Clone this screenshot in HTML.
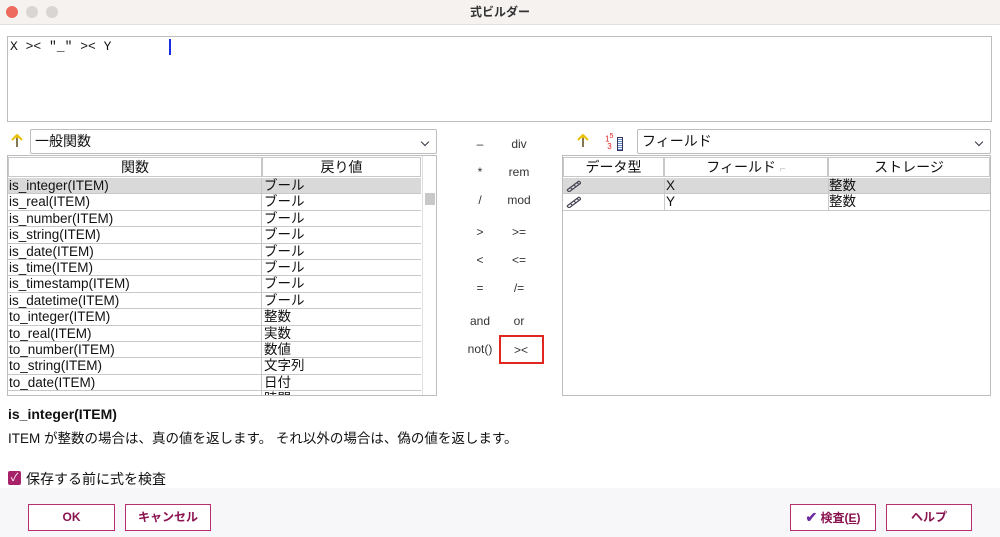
<!DOCTYPE html>
<html><head><meta charset="utf-8"><style>
*{box-sizing:border-box;margin:0;padding:0}
body{width:1000px;height:537px;background:#fff;font-family:"Liberation Sans","Noto Sans CJK JP",sans-serif;font-size:13px;color:#111;position:relative;overflow:hidden}
.a{position:absolute}
.title{left:0;top:0;width:1000px;height:25px;background:#f6f2f0;border-bottom:1px solid #e2dedb;text-align:center;line-height:24px;font-size:12px;font-weight:bold;color:#333}
.dot{width:12px;height:12px;border-radius:50%;top:6px}
.ta{left:7px;top:36px;width:985px;height:86px;border:1px solid #bdbdbd}
.combo{height:25px;border:1px solid #bdbdbd;border-radius:2px;line-height:23px;padding-left:4px;font-size:14px}
.chev{position:absolute;right:8px;top:9px;width:6px;height:6px;border-right:1.5px solid #334;border-bottom:1.5px solid #334;transform:rotate(45deg)}
.tbl{border:1px solid #bdbdbd}
.row{position:absolute;height:16.4px;border-bottom:1px solid #c8c8c8;line-height:15px;font-size:13.5px}
.hd{position:absolute;top:1px;height:20px;border:1px solid #c8c8c8;text-align:center;line-height:19px;font-size:14px}
.op{position:absolute;font-size:12px;color:#333;width:40px;text-align:center;font-family:"Liberation Sans",sans-serif}
.btn{position:absolute;top:504px;height:27px;border:1px solid #b5306e;background:#fff;color:#8a1450;font-weight:bold;font-size:12px;text-align:center;line-height:25px}
</style></head><body>
<div class="a title">式ビルダー</div>
<div class="a dot" style="left:6px;background:#ed6a5e"></div>
<div class="a dot" style="left:26px;background:#d8d5d3"></div>
<div class="a dot" style="left:46px;background:#d8d5d3"></div>
<div class="a ta"><div class="a" style="left:2px;top:2px;font-family:'Liberation Mono',monospace;font-size:13px">X &gt;&lt; "_" &gt;&lt; Y</div><div class="a" style="left:161px;top:2px;width:2px;height:16px;background:#1a2ee0"></div></div>

<svg class="a" style="left:11px;top:134px" width="12" height="14"><path d="M6 1V13M1 6L6 1L11 6" stroke="#e8c000" stroke-width="2" fill="none"/><path d="M6 4V13" stroke="#2030a0" stroke-width="1"/></svg>
<div class="a combo" style="left:30px;top:129px;width:407px">一般関数<span class="chev"></span></div>
<div class="a tbl" style="left:7px;top:155px;width:430px;height:241px;overflow:hidden">
<div class="hd" style="left:0;width:254px">関数</div>
<div class="hd" style="left:254px;width:159px">戻り値</div>
<div class="a" style="left:414px;top:0;width:15px;height:240px;background:#fff;border-left:1px solid #e0e0e0"></div>
<div class="a" style="left:417px;top:37px;width:10px;height:12px;background:#c8c8c8"></div>
<div class="a" style="left:0;top:22px;width:413px">
<div class="row" style="top:0;width:413px;background:#d9d9d9"><span class="a" style="left:1px">is_integer(ITEM)</span><span class="a" style="left:256px">ブール</span></div>
<div class="row" style="top:16.4px;width:413px"><span class="a" style="left:1px">is_real(ITEM)</span><span class="a" style="left:256px">ブール</span></div>
<div class="row" style="top:32.8px;width:413px"><span class="a" style="left:1px">is_number(ITEM)</span><span class="a" style="left:256px">ブール</span></div>
<div class="row" style="top:49.2px;width:413px"><span class="a" style="left:1px">is_string(ITEM)</span><span class="a" style="left:256px">ブール</span></div>
<div class="row" style="top:65.6px;width:413px"><span class="a" style="left:1px">is_date(ITEM)</span><span class="a" style="left:256px">ブール</span></div>
<div class="row" style="top:82px;width:413px"><span class="a" style="left:1px">is_time(ITEM)</span><span class="a" style="left:256px">ブール</span></div>
<div class="row" style="top:98.4px;width:413px"><span class="a" style="left:1px">is_timestamp(ITEM)</span><span class="a" style="left:256px">ブール</span></div>
<div class="row" style="top:114.8px;width:413px"><span class="a" style="left:1px">is_datetime(ITEM)</span><span class="a" style="left:256px">ブール</span></div>
<div class="row" style="top:131.2px;width:413px"><span class="a" style="left:1px">to_integer(ITEM)</span><span class="a" style="left:256px">整数</span></div>
<div class="row" style="top:147.6px;width:413px"><span class="a" style="left:1px">to_real(ITEM)</span><span class="a" style="left:256px">実数</span></div>
<div class="row" style="top:164px;width:413px"><span class="a" style="left:1px">to_number(ITEM)</span><span class="a" style="left:256px">数値</span></div>
<div class="row" style="top:180.4px;width:413px"><span class="a" style="left:1px">to_string(ITEM)</span><span class="a" style="left:256px">文字列</span></div>
<div class="row" style="top:196.8px;width:413px"><span class="a" style="left:1px">to_date(ITEM)</span><span class="a" style="left:256px">日付</span></div>
<div class="row" style="top:213.2px;width:413px"><span class="a" style="left:256px">時間</span></div>
<div class="a" style="left:253px;top:0;width:1px;height:230px;background:#c8c8c8"></div>
</div></div>

<div class="op" style="left:460px;top:137px">–</div><div class="op" style="left:499px;top:137px">div</div>
<div class="op" style="left:460px;top:165px">*</div><div class="op" style="left:499px;top:165px">rem</div>
<div class="op" style="left:460px;top:193px">/</div><div class="op" style="left:499px;top:193px">mod</div>
<div class="op" style="left:460px;top:225px">&gt;</div><div class="op" style="left:499px;top:225px">&gt;=</div>
<div class="op" style="left:460px;top:253px">&lt;</div><div class="op" style="left:499px;top:253px">&lt;=</div>
<div class="op" style="left:460px;top:281px">=</div><div class="op" style="left:499px;top:281px">/=</div>
<div class="op" style="left:460px;top:314px">and</div><div class="op" style="left:499px;top:314px">or</div>
<div class="op" style="left:460px;top:342px">not()</div><div class="op" style="left:501px;top:343px">&gt;&lt;</div>
<div class="a" style="left:499px;top:335px;width:45px;height:29px;border:2px solid #e0261f"></div>

<svg class="a" style="left:577px;top:134px" width="12" height="14"><path d="M6 1V13M1 6L6 1L11 6" stroke="#e8c000" stroke-width="2" fill="none"/><path d="M6 4V13" stroke="#2030a0" stroke-width="1"/></svg>
<div class="a" style="left:605px;top:133px;color:#e02020;font-size:8px;line-height:7px">1<sup style="font-size:7px">5</sup><br>&nbsp;3</div>
<div class="a" style="left:617px;top:137px;width:6px;height:14px;border:1px solid #335;background:repeating-linear-gradient(#fff 0 1px,#68c 1px 2px)"></div>
<div class="a combo" style="left:637px;top:129px;width:354px">フィールド<span class="chev"></span></div>
<div class="a tbl" style="left:562px;top:155px;width:429px;height:241px">
<div class="hd" style="left:0;width:101px">データ型</div>
<div class="hd" style="left:101px;width:164px">フィールド <span style="color:#bbb;font-size:10px">⌐</span></div>
<div class="hd" style="left:265px;width:162px">ストレージ</div>
<div class="row" style="top:22px;left:0;width:427px;background:#d9d9d9"><svg class="a" style="left:2px;top:1px" width="16" height="13"><path d="M2 11L14 2M4 13L16 4M2 11L4 13M5.5 8.5L7.5 10.5M9 6L11 8M12 3.5L14 5.5M14 2L16 4" stroke="#445" stroke-width="1.2" fill="none"/></svg><span class="a" style="left:103px">X</span><span class="a" style="left:266px">整数</span></div>
<div class="row" style="top:38.4px;left:0;width:427px"><svg class="a" style="left:2px;top:1px" width="16" height="13"><path d="M2 11L14 2M4 13L16 4M2 11L4 13M5.5 8.5L7.5 10.5M9 6L11 8M12 3.5L14 5.5M14 2L16 4" stroke="#445" stroke-width="1.2" fill="none"/></svg><span class="a" style="left:103px">Y</span><span class="a" style="left:266px">整数</span></div>
<div class="a" style="left:101px;top:22px;width:1px;height:33px;background:#c8c8c8"></div>
<div class="a" style="left:265px;top:22px;width:1px;height:33px;background:#c8c8c8"></div>
</div>

<div class="a" style="left:8px;top:406px;font-weight:bold;font-size:14px">is_integer(ITEM)</div>
<div class="a" style="left:8px;top:427px;font-size:13.5px">ITEM が整数の場合は、真の値を返します。 それ以外の場合は、偽の値を返します。</div>
<div class="a" style="left:8px;top:471px;width:13px;height:14px;background:#a8226a;border-radius:2px;color:#fff;font-size:11px;text-align:center;line-height:14px">✓</div>
<div class="a" style="left:26px;top:469px;font-size:14px">保存する前に式を検査</div>

<div class="a" style="left:0;top:488px;width:1000px;height:49px;background:#f7f7f9"></div>
<div class="btn" style="left:28px;width:87px">OK</div>
<div class="btn" style="left:125px;width:86px">キャンセル</div>
<div class="btn" style="left:790px;width:86px"><span style="color:#6a2aa0;font-size:14px">✔</span> 検査(<u>E</u>)</div>
<div class="btn" style="left:886px;width:86px">ヘルプ</div>
</body></html>
